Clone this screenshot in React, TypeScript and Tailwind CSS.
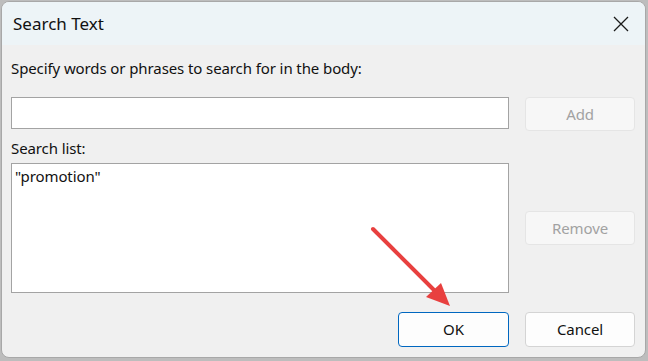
import React from "react";

const font = { fontFamily: '"Segoe UI", "Noto Sans", "Open Sans", sans-serif' };

export default function App() {
  return (
    <div
      className="relative w-[648px] h-[361px] overflow-hidden bg-[#bdbdbd] pt-[1px] pl-[1px] pr-[2px] pb-[3px]"
      style={font}
    >
      <div className="h-full flex flex-col rounded-[8px] border border-[#a8a8a8] bg-[#f0f0f0] overflow-hidden">
        <div className="h-[43px] shrink-0 bg-[#edf4f7] flex items-center justify-between pl-[11px] pr-[16px]">
          <span className="text-[17px] text-[#111] leading-none -mt-[1px]">Search Text</span>
          <svg width="16" height="16" viewBox="0 0 16 16" className="mt-[1px]">
            <path d="M1 1 L15 15 M15 1 L1 15" stroke="#1a1a1a" strokeWidth="1.3" fill="none" />
          </svg>
        </div>
        <div className="flex-1 flex flex-col pl-[9px] pr-[10px] text-[15px] text-[#111] tracking-[-0.1px]">
          <div className="mt-[12px] h-[22px] leading-[22px]">Specify words or phrases to search for in the body:</div>
          <div className="mt-[18px] flex items-start gap-[16px]">
            <div className="w-[499px] h-[32px] bg-white border border-[#a3a3a3]" />
            <div className="w-[110px] h-[34px] rounded-[4px] border border-[#e5e5e5] bg-[#f7f7f7] flex items-center justify-center text-[#a2a2a2]">
              Add
            </div>
          </div>
          <div className="flex gap-[16px]">
            <div className="w-[499px] flex flex-col">
              <div className="mt-[6px] h-[22px] leading-[22px]">Search list:</div>
              <div className="mt-[4px] h-[130px] bg-white border border-[#a3a3a3] pl-[3px] pt-[1px] leading-[22px]">
                "promotion"
              </div>
            </div>
            <div className="pt-[80px]">
              <div className="w-[110px] h-[34px] rounded-[4px] border border-[#e5e5e5] bg-[#f7f7f7] flex items-center justify-center text-[#a2a2a2]">
                Remove
              </div>
            </div>
          </div>
          <div className="mt-[19px] flex justify-end gap-[16px]">
            <div className="w-[111px] h-[35px] rounded-[4px] border border-[#0067c0] bg-[#fdfdfd] flex items-center justify-center text-[#111]">
              OK
            </div>
            <div className="w-[110px] h-[35px] rounded-[4px] border border-[#d4d4d4] bg-[#fdfdfd] flex items-center justify-center text-[#111]">
              Cancel
            </div>
          </div>
        </div>
      </div>
      <svg className="absolute left-0 top-0 pointer-events-none" width="648" height="361" viewBox="0 0 648 361">
        <line x1="373" y1="229" x2="436" y2="292" stroke="#e8403f" strokeWidth="4" strokeLinecap="round" />
        <polygon points="450,306 426,297 441,283" fill="#e8403f" />
      </svg>
    </div>
  );
}
